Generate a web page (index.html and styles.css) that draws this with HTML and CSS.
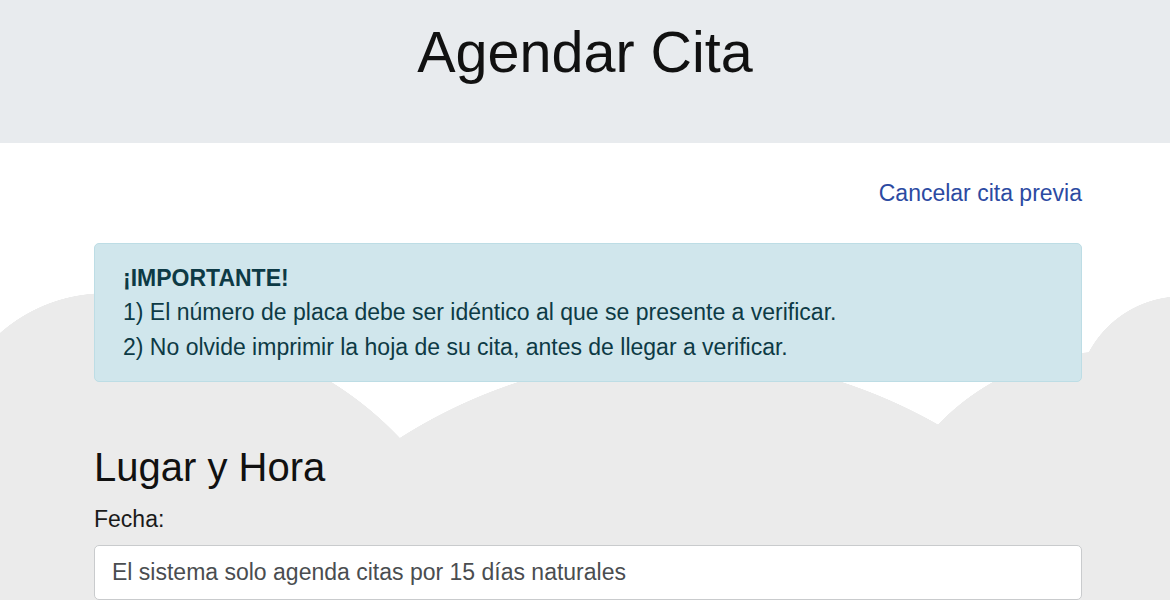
FILE: index.html
```html
<!DOCTYPE html>
<html lang="es">
<head>
    <meta charset="UTF-8">
    <meta name="viewport" content="width=device-width, initial-scale=1.0">
    <title>Agendar Cita</title>
    <link rel="stylesheet" href="styles.css">
</head>
<body>
    <header class="jumbotron">
        <h1 class="title">Agendar Cita</h1>
    </header>

    <main class="page">
        <div class="container">
            <div class="top-links">
                <a href="#" class="cancel-link">Cancelar cita previa</a>
            </div>

            <div class="alert-info">
                <strong>¡IMPORTANTE!</strong><br>
                1) El número de placa debe ser idéntico al que se presente a verificar.<br>
                2) No olvide imprimir la hoja de su cita, antes de llegar a verificar.
            </div>

            <h3 class="section-title">Lugar y Hora</h3>

            <div class="form-group">
                <label for="fecha">Fecha:</label>
                <input type="text" id="fecha" class="form-control" placeholder="El sistema solo agenda citas por 15 días naturales">
            </div>
        </div>
    </main>
</body>
</html>
```

FILE: styles.css
```css
html, body {
    margin: 0;
    background-color: #fff;
}
body {
    font-family: "Liberation Sans", Arial, sans-serif;
    font-size: 23px;
    line-height: 1.5;
    color: #1a1a1a;
}
.jumbotron {
    background-color: #e8ebee;
    height: 143px;
    box-sizing: border-box;
    padding-top: 18px;
    text-align: center;
}
.title {
    margin: 0;
    font-size: 57.5px;
    font-weight: 400;
    line-height: 1.2;
    color: #111;
}

/* grey clouds behind the form */
.page {
    min-height: 470px;
    background-color: #fff;
    background-image:
        radial-gradient(circle 159px at 105px 309px, #ebebeb 158.5px, transparent 159px),
        radial-gradient(circle 344px at 150px 531px, #ebebeb 343.5px, transparent 344px),
        radial-gradient(circle 522px at 680px 735px, #ebebeb 521.5px, transparent 522px),
        radial-gradient(circle 239px at 1110px 447px, #ebebeb 238.5px, transparent 239px),
        radial-gradient(circle 106px at 1182px 259px, #ebebeb 105.5px, transparent 106px),
        linear-gradient(to bottom, transparent 302px, #ebebeb 302px);
    background-repeat: no-repeat;
}
.container {
    padding: 33px 88px 0 94px;
}
.top-links {
    text-align: right;
}
.cancel-link {
    color: #2c4aa2;
    text-decoration: none;
}
.alert-info {
    margin-top: 32px;
    padding: 17px 28px;
    background-color: #d0e6ec;
    border: 1px solid #bddde5;
    border-radius: 5px;
    color: #0d3a45;
}
.section-title {
    margin: 61px 0 11px;
    font-size: 40px;
    font-weight: 400;
    line-height: 1.2;
    color: #111;
}
.form-group label {
    display: block;
    margin-bottom: 8px;
}
.form-control {
    display: block;
    width: 100%;
    box-sizing: border-box;
    height: 55px;
    padding: 8px 17px;
    font-family: inherit;
    font-size: 23px;
    color: #4a4d50;
    background-color: #fff;
    border: 1px solid #c9cbcd;
    border-radius: 5px;
}
.form-control::placeholder {
    color: #4a4d50;
    opacity: 1;
}
```
